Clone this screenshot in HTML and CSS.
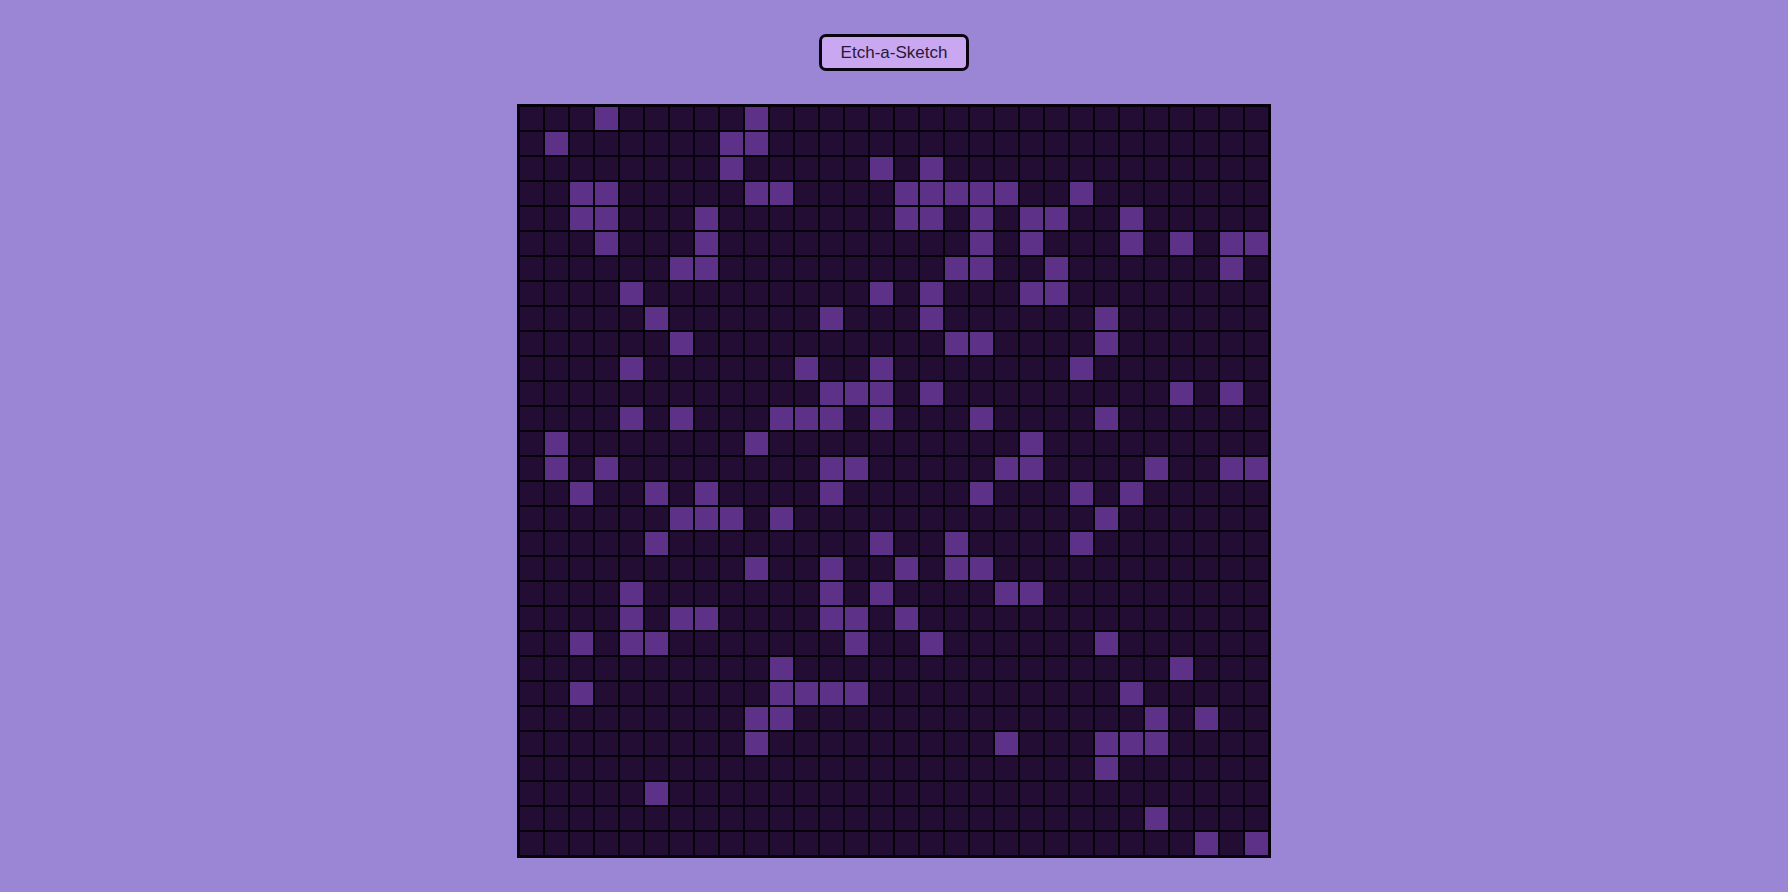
FILE: index.html
```html
<!DOCTYPE html>
<html lang="en">
<head>
    <meta charset="UTF-8">
    <meta name="viewport" content="width=device-width, initial-scale=1.0">
    <title>Etch-a-Sketch</title>
    <link rel="stylesheet" href="styles.css">
</head>
<body>
    <main class="app">
        <button type="button" class="title-btn">Etch-a-Sketch</button>
        <div class="board" id="board"></div>
    </main>

    <script>
        const SIZE = 30;
        // cells already drawn, row by row
        const drawn = [
            [3, 9],
            [1, 8, 9],
            [8, 14, 16],
            [2, 3, 9, 10, 15, 16, 17, 18, 19, 22],
            [2, 3, 7, 15, 16, 18, 20, 21, 24],
            [3, 7, 18, 20, 24, 26, 28, 29],
            [6, 7, 17, 18, 21, 28],
            [4, 14, 16, 20, 21],
            [5, 12, 16, 23],
            [6, 17, 18, 23],
            [4, 11, 14, 22],
            [12, 13, 14, 16, 26, 28],
            [4, 6, 10, 11, 12, 14, 18, 23],
            [1, 9, 20],
            [1, 3, 12, 13, 19, 20, 25, 28, 29],
            [2, 5, 7, 12, 18, 22, 24],
            [6, 7, 8, 10, 23],
            [5, 14, 17, 22],
            [9, 12, 15, 17, 18],
            [4, 12, 14, 19, 20],
            [4, 6, 7, 12, 13, 15],
            [2, 4, 5, 13, 16, 23],
            [10, 26],
            [2, 10, 11, 12, 13, 24],
            [9, 10, 25, 27],
            [9, 19, 23, 24, 25],
            [23],
            [5],
            [25],
            [27, 29]
        ];

        const board = document.getElementById('board');
        for (let r = 0; r < SIZE; r++) {
            for (let c = 0; c < SIZE; c++) {
                const cell = document.createElement('div');
                cell.className = 'cell';
                if (drawn[r].includes(c)) cell.classList.add('on');
                cell.addEventListener('mouseover', () => cell.classList.add('on'));
                board.appendChild(cell);
            }
        }
    </script>
</body>
</html>
```

FILE: styles.css
```css
* {
    box-sizing: border-box;
}

body {
    margin: 0;
    background-color: #9a86d4;
    font-family: 'Liberation Sans', Arial, sans-serif;
}

.app {
    display: flex;
    flex-direction: column;
    align-items: center;
    padding-top: 34px;
    gap: 33px;
}

.title-btn {
    background-color: #c9a7f1;
    color: #2a1838;
    border: 3px solid #0a0410;
    border-radius: 7px;
    padding: 6px 19px;
    font-family: 'Liberation Sans', Arial, sans-serif;
    font-size: 17px;
    line-height: 19px;
    cursor: pointer;
}

.board {
    display: grid;
    grid-template-columns: repeat(30, 25px);
    grid-template-rows: repeat(30, 25px);
    width: 754px;
    height: 754px;
    border: 2px solid #05020a;
    background-color: #05020a;
}

.cell {
    border: 1px solid #05020a;
    background-color: #230d34;
}

.cell.on {
    background-color: #5e3189;
}
```
